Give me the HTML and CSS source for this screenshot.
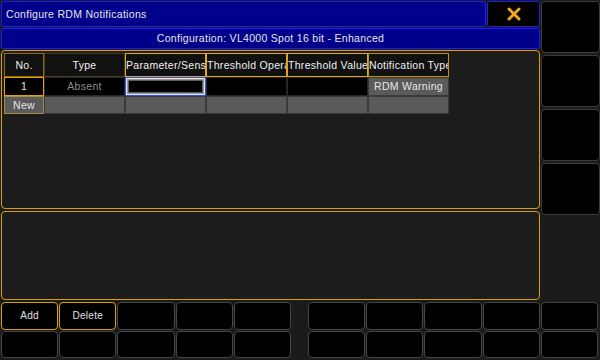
FILE: index.html
```html
<!DOCTYPE html>
<html lang="en">
<head>
    <meta charset="UTF-8">
    <title>Configure RDM Notifications</title>
    <link rel="stylesheet" href="styles.css">
</head>
<body>
<div class="screen">
    <div class="upper">
        <div class="main">
            <div class="title-row">
                <div class="title">Configure RDM Notifications</div>
                <div class="close">
                    <svg width="14" height="14" viewBox="0 0 14 14">
                        <path d="M2 2 L12 12 M12 2 L2 12" stroke="#f2a91e" stroke-width="3" stroke-linecap="round"/>
                    </svg>
                </div>
            </div>
            <div class="config">Configuration: VL4000 Spot 16 bit - Enhanced</div>

            <div class="panel table-panel">
                <div class="sheet">
                    <div class="cell head head-no">No.</div>
                    <div class="cell head head-dim">Type</div>
                    <div class="cell head">Parameter/Sensor</div>
                    <div class="cell head">Threshold Operator</div>
                    <div class="cell head">Threshold Value</div>
                    <div class="cell head head-last">Notification Type</div>

                    <div class="cell num">1</div>
                    <div class="cell dark faded">Absent</div>
                    <div class="cell edit"></div>
                    <div class="cell dark"></div>
                    <div class="cell dark"></div>
                    <div class="cell grey">RDM Warning</div>

                    <div class="cell new">New</div>
                    <div class="cell grey"></div>
                    <div class="cell grey"></div>
                    <div class="cell grey"></div>
                    <div class="cell grey"></div>
                    <div class="cell grey"></div>
                </div>
            </div>

            <div class="panel msg-panel"></div>
        </div>

        <div class="side">
            <div class="side-box"></div>
            <div class="side-box"></div>
            <div class="side-box"></div>
            <div class="side-box"></div>
        </div>
    </div>

    <div class="keys">
        <div class="key-group">
            <div class="key on">Add</div>
            <div class="key on">Delete</div>
            <div class="key"></div>
            <div class="key"></div>
            <div class="key"></div>
            <div class="key"></div>
            <div class="key"></div>
            <div class="key"></div>
            <div class="key"></div>
            <div class="key"></div>
        </div>
        <div class="key-group">
            <div class="key"></div>
            <div class="key"></div>
            <div class="key"></div>
            <div class="key"></div>
            <div class="key"></div>
            <div class="key"></div>
            <div class="key"></div>
            <div class="key"></div>
            <div class="key"></div>
            <div class="key"></div>
        </div>
    </div>
</div>
</body>
</html>
```

FILE: styles.css
```css
body {
    margin: 0;
    background: #1b1b1b;
    font-family: "Liberation Sans", Arial, sans-serif;
    font-size: 10.5px;
    letter-spacing: 0.3px;
    color: #e6e6e6;
}
.screen {
    width: 600px;
    height: 360px;
    overflow: hidden;
}
.upper {
    display: flex;
    gap: 1px;
    padding: 1px 0 0 1px;
}
.main {
    width: 539px;
    display: flex;
    flex-direction: column;
}
.title-row {
    display: flex;
    gap: 1px;
    height: 26px;
}
.title {
    flex: 1;
    box-sizing: border-box;
    background: #00008a;
    border: 1px solid #1c1cf5;
    border-radius: 3px;
    padding-left: 4px;
    line-height: 24px;
}
.close {
    width: 53px;
    box-sizing: border-box;
    background: #000;
    border: 1px solid #1c1cf5;
    border-radius: 3px;
    display: flex;
    align-items: center;
    justify-content: center;
}
.config {
    margin-top: 1px;
    height: 21px;
    box-sizing: border-box;
    background: #00008a;
    border: 1px solid #1c1cf5;
    border-radius: 3px;
    text-align: center;
    line-height: 19px;
}
.panel {
    box-sizing: border-box;
    background: #1c1c1c;
    border: 1px solid #dc9e00;
    border-radius: 4px;
}
.table-panel {
    margin-top: 1px;
    height: 159px;
    padding: 2px;
}
.msg-panel {
    margin-top: 2px;
    height: 89px;
}

/* table */
.sheet {
    display: grid;
    grid-template-columns: 40px repeat(5, 81px);
    grid-template-rows: 24px 19px 18px;
}
.cell {
    box-sizing: border-box;
    border: 1px solid #2a2a2a;
    white-space: nowrap;
    overflow: hidden;
    text-align: center;
}
.head {
    background: #111;
    border-color: #e0a61c;
    line-height: 22px;
    color: #f0f0f0;
}
.head-no { border-color: #8c6a16; }
.head-dim { border-color: #4a3c16; }
.head-last { border-color: #c88c10; }
.num {
    background: #000;
    border-color: #e4a200;
    line-height: 17px;
}
.dark {
    background: #000;
    border-color: #262626;
    line-height: 17px;
}
.faded { color: #8c8c8c; }
.edit {
    background: #000;
    border-color: #2f4cff;
    box-shadow: inset 0 0 0 1px #e4e4e4, inset 0 0 0 2px #9a9a9a, inset 0 0 0 3px #5c5c5c;
}
.grey {
    background: #5a5a5a;
    border-color: #3a3a3a;
    line-height: 17px;
}
.new {
    background: #5a5a5a;
    border-color: #a8894a;
    line-height: 16px;
}

/* right column */
.side {
    width: 59px;
    display: flex;
    flex-direction: column;
    gap: 2px;
}
.side-box {
    height: 52px;
    box-sizing: border-box;
    background: #000;
    border: 1px solid #3c3c3c;
    border-radius: 4px;
}

/* bottom keys */
.keys {
    display: flex;
    gap: 17px;
    margin-top: 2px;
    padding-left: 1px;
}
.key-group {
    width: 290px;
    display: grid;
    grid-template-columns: repeat(5, 1fr);
    grid-template-rows: 28px 27px;
    gap: 1px;
}
.key {
    box-sizing: border-box;
    background: #000;
    border: 1px solid #454545;
    border-radius: 4px;
    text-align: center;
    line-height: 26px;
    font-size: 10px;
    color: #e0e0e0;
}
.key.on { border-color: #e0a000; }
```
